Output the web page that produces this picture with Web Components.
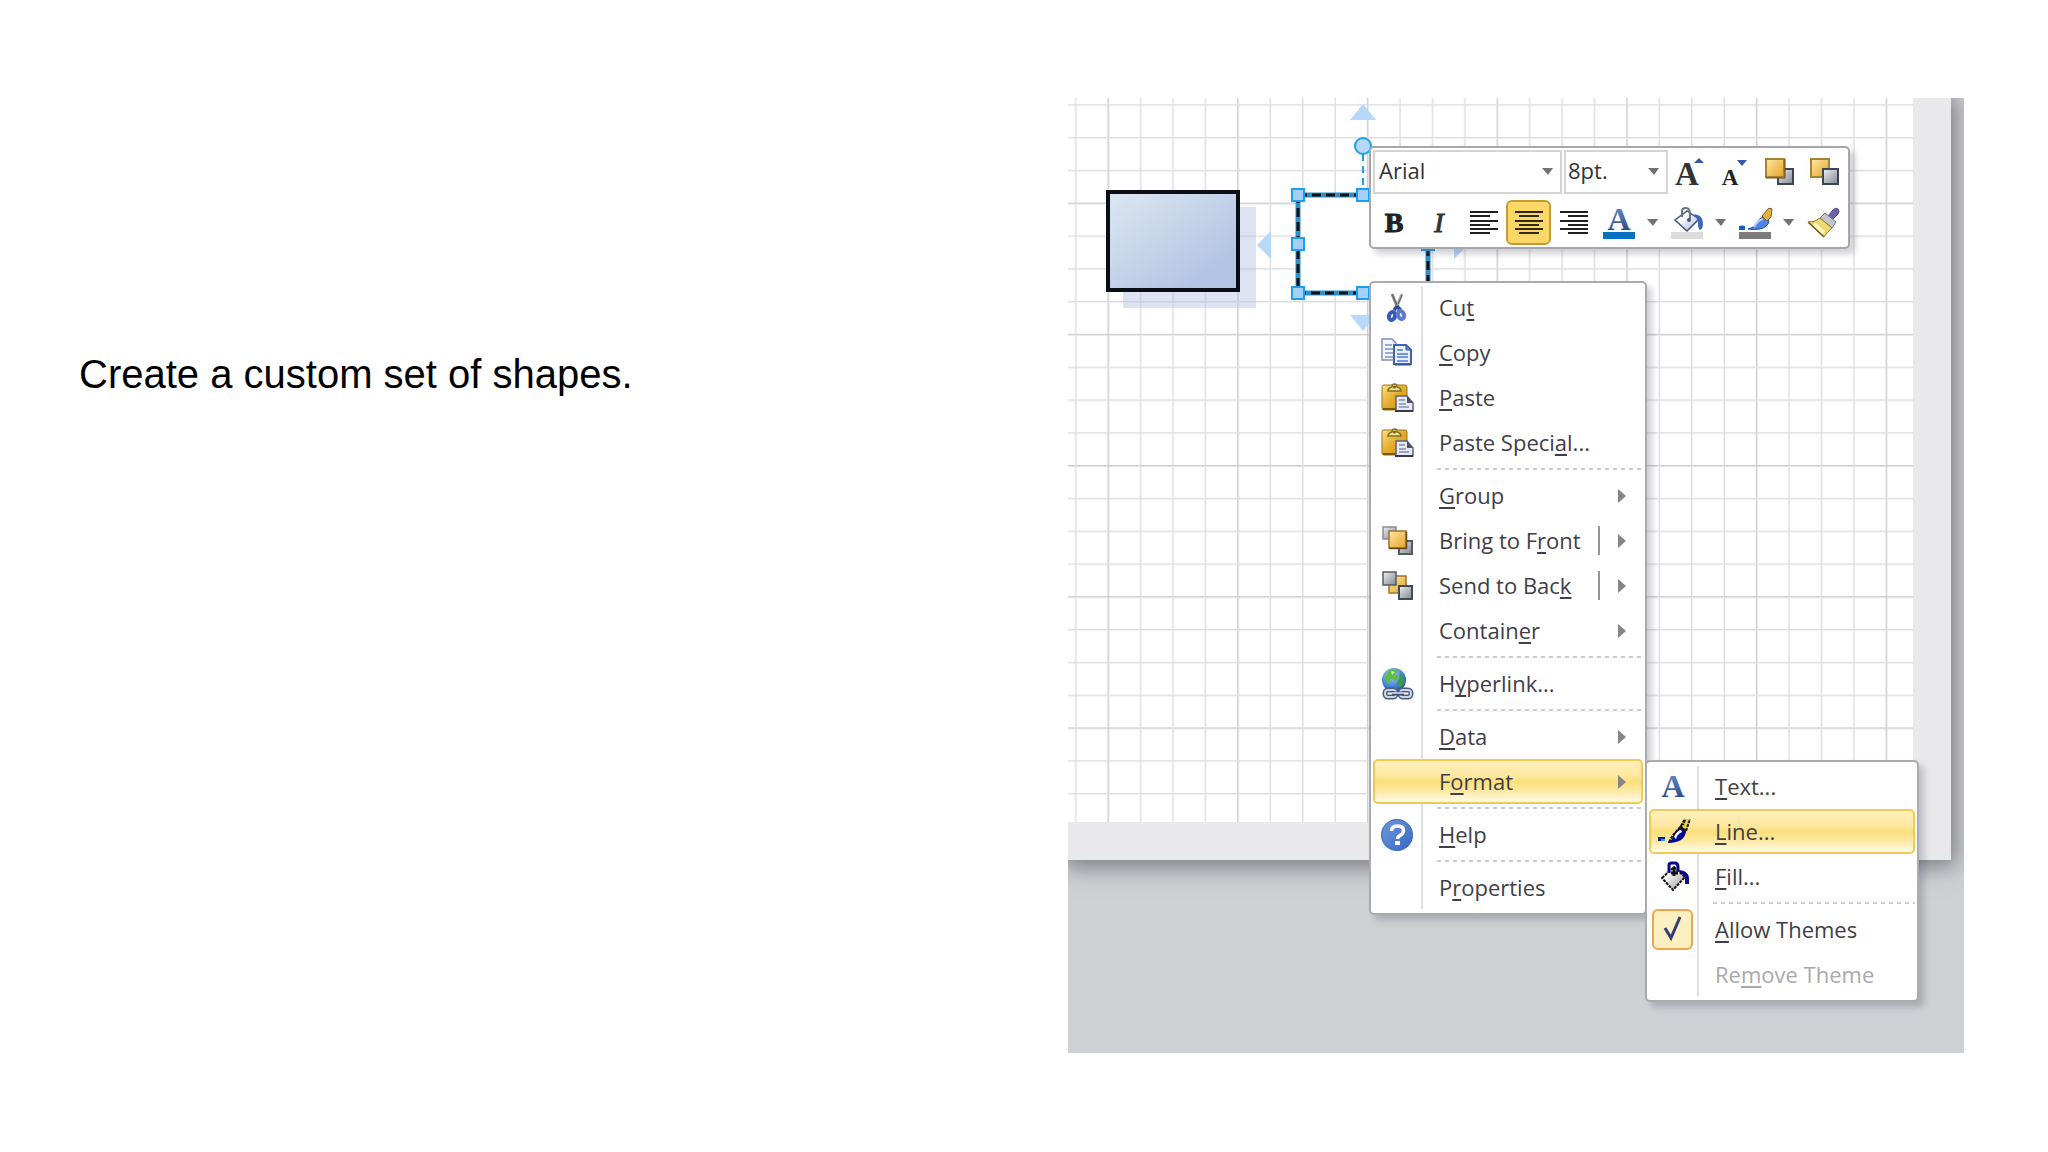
<!DOCTYPE html>
<html lang="en">
<head>
<meta charset="utf-8">
<title>Create a custom set of shapes</title>
<style>
	body {
		margin: 0;
		background: #fff;
		font-family: "Liberation Sans", Arial, sans-serif;
	}
	/* access keys */
	u {
		text-decoration-thickness: 2px;
		text-underline-offset: 3px;
		text-decoration-skip-ink: none;
	}
</style>
</head>
<body>
<slide-page>
	<span>Create a custom set of shapes.</span>
	<drawing-stage slot="figure">
		<shape-canvas></shape-canvas>
		<mini-toolbar slot="toolbar"></mini-toolbar>
		<context-menu slot="menu" label="Shape">
			<menu-entry icon="cut">Cu<u>t</u></menu-entry>
			<menu-entry icon="copy"><u>C</u>opy</menu-entry>
			<menu-entry icon="paste"><u>P</u>aste</menu-entry>
			<menu-entry icon="paste">Paste Speci<u>a</u>l...</menu-entry>
			<menu-rule></menu-rule>
			<menu-entry more><u>G</u>roup</menu-entry>
			<menu-entry icon="bring" more split>Bring to F<u>r</u>ont</menu-entry>
			<menu-entry icon="send" more split>Send to Bac<u>k</u></menu-entry>
			<menu-entry more>Contain<u>e</u>r</menu-entry>
			<menu-rule></menu-rule>
			<menu-entry icon="link">H<u>y</u>perlink...</menu-entry>
			<menu-rule></menu-rule>
			<menu-entry more><u>D</u>ata</menu-entry>
			<menu-entry more active>F<u>o</u>rmat</menu-entry>
			<menu-rule></menu-rule>
			<menu-entry icon="help"><u>H</u>elp</menu-entry>
			<menu-rule></menu-rule>
			<menu-entry>P<u>r</u>operties</menu-entry>
		</context-menu>
		<context-menu slot="submenu" label="Format">
			<menu-entry icon="text"><u>T</u>ext...</menu-entry>
			<menu-entry icon="line" active><u>L</u>ine...</menu-entry>
			<menu-entry icon="fill"><u>F</u>ill...</menu-entry>
			<menu-rule></menu-rule>
			<menu-entry checked><u>A</u>llow Themes</menu-entry>
			<menu-entry disabled>Re<u>m</u>ove Theme</menu-entry>
		</context-menu>
	</drawing-stage>
</slide-page>

<script>
const gold = `<linearGradient id="gold" x1="0" y1="0" x2="1" y2="1"><stop offset="0" stop-color="#ffe9a8"/><stop offset="1" stop-color="#e2a326"/></linearGradient>`;
const steel = `<linearGradient id="steel" x1="0" y1="0" x2="1" y2="1"><stop offset="0" stop-color="#eef0f3"/><stop offset="1" stop-color="#7f8791"/></linearGradient>`;

const icons = {
	cut: `
		<path d="M11 2l7 17" stroke="#8b8d93" stroke-width="3"/>
		<path d="M21 2l-7 17" stroke="#a6a8ad" stroke-width="3"/>
		<path d="M11 2l5 11M21 3l-4 9" stroke="#5e6066" stroke-width="1"/>
		<path d="M16 14l-3 4M16 14l4 4" stroke="#2c49a0" stroke-width="3"/>
		<ellipse cx="11" cy="24" rx="3" ry="4" transform="rotate(20 11 24)" fill="#fff" stroke="#3559bd" stroke-width="4"/>
		<ellipse cx="20" cy="23" rx="3" ry="4" transform="rotate(-20 20 23)" fill="#fff" stroke="#5a7bd2" stroke-width="4"/>`,
	copy: `
		<path d="M1 2h10l4 4v17H1z" fill="#f4f7fd" stroke="#8190b8" stroke-width="1.5"/>
		<path d="M4 8h7M4 12h9M4 16h9M4 20h9" stroke="#7b95ce" stroke-width="1.5"/>
		<path d="M13 8h12l5 5v14H13z" fill="#eaf0fd" stroke="#3d64b5" stroke-width="2"/>
		<path d="M25 8v5h5z" fill="#5f87d4" stroke="#2e57ab"/>
		<path d="M16 13h6M16 17h11M16 20h11M16 24h11" stroke="#4b79cf" stroke-width="1.5"/>
		<path d="M14 28h16" stroke="#2e4c8e"/>`,
	paste: `<linearGradient id="board" x1="0" y1="0" x2="1" y2="1"><stop offset="0" stop-color="#fbe08a"/><stop offset=".5" stop-color="#e3ac2c"/><stop offset="1" stop-color="#c98d12"/></linearGradient>
		<rect x="1" y="3" width="25" height="25" rx="2" fill="url(#board)" stroke="#9c741a"/>
		<path d="M2 27h14" stroke="#775714" stroke-width="2"/>
		<path d="M7 9q0-3 4-4 0-3 2.500-3t2.500 3q4 1 4 4z" fill="#ece08a" stroke="#827120" stroke-width="1.5"/>
		<circle cx="13.5" cy="5" r="1.5" fill="#6d611f"/>
		<path d="M15 14h11l6 7v8H15z" fill="#e5e9f3" stroke="#5a6378" stroke-width="1.5"/>
		<path d="M26 14v7h6z" fill="#4e5462"/>
		<path d="M18 18h6M18 22h7M18 25h10" stroke="#8590ad" stroke-width="1.5"/>
		<path d="M14 29h18" stroke="#353b49" stroke-width="2"/>`,
	bring: `${gold}${steel}
		<rect x="2" y="2" width="13" height="12" fill="url(#steel)" stroke="#8a8d93" stroke-width="1.5"/>
		<rect x="18" y="16" width="13" height="13" fill="url(#steel)" stroke="#555a63" stroke-width="2"/>
		<rect x="8" y="6" width="17" height="17" fill="url(#gold)" stroke="#a0712c" stroke-width="1.5"/>
		<path d="M8 23.5h17.5V7" stroke="#634920" stroke-width="1.5"/>`,
	send: `${gold}${steel}
		<rect x="8" y="6" width="17" height="17" fill="url(#gold)" stroke="#a0712c" stroke-width="1.5"/>
		<rect x="2" y="2" width="13" height="13" fill="url(#steel)" stroke="#555a63" stroke-width="1.5"/>
		<rect x="18" y="16" width="13" height="13" fill="url(#steel)" stroke="#454b54" stroke-width="2"/>`,
	link: `
		<radialGradient id="sea" cx=".4" cy=".3" r=".8"><stop offset="0" stop-color="#a9d5fb"/><stop offset=".6" stop-color="#4581d4"/><stop offset="1" stop-color="#1f3f8d"/></radialGradient>
		<circle cx="13" cy="12" r="12" fill="url(#sea)"/>
		<path d="M7 3q6-4 10 0l-3 3 3 2-2 5-5-2-3 5-4-5 2-4z" fill="#5dba4b"/>
		<path d="M19 5q5 4 4 10l-4 5-3-5 2-4z" fill="#3c9c49"/>
		<path d="M10 3l4 1-3 3z" fill="#d3f0a0"/>
		<g stroke="#4c5c7b" stroke-width="5"><rect x="4" y="22" width="11" height="7" rx="3"/><rect x="19" y="22" width="11" height="7" rx="3"/></g>
		<g stroke="#cad5e8" stroke-width="2"><rect x="4" y="22" width="11" height="7" rx="3"/><rect x="19" y="22" width="11" height="7" rx="3"/></g>
		<path d="M11 25.5h12" stroke="#3b4c6c" stroke-width="4"/><path d="M11 25h12" stroke="#e4ebf7" stroke-width="1.5"/>`,
	help: `
		<linearGradient id="ball" x1="0" y1="0" x2="1" y2="1"><stop offset="0" stop-color="#6f9be0"/><stop offset="1" stop-color="#3764c2"/></linearGradient>
		<circle cx="16" cy="16" r="16" fill="url(#ball)"/><circle cx="16" cy="16" r="15.5" stroke="#4a72bd"/>
		<path d="M10.5 12q0-5 6-5t6 4.500q0 3-3.500 5-2.500 1.500-2.500 3.500" stroke="#fff" stroke-width="3.5"/>
		<rect x="14" y="22" width="5" height="4" fill="#fff"/>`,
	text: `
		<linearGradient id="ink" x1="0" y1="0" x2="0" y2="1"><stop offset="0" stop-color="#6d9bd5"/><stop offset="1" stop-color="#213a78"/></linearGradient>
		<text x="16" y="26" text-anchor="middle" font-family="Liberation Serif, serif" font-weight="700" font-size="32" fill="url(#ink)">A</text>`,
	line: `
		<path d="M1 21h7v4H1z" fill="#0a1b8c"/><path d="M4 23h4v2H4z" fill="#2aa5b5"/>
		<path d="M11 26q4-1 5-6 2-6 8-9l5 4q0 5-5 9-5 3-13 3z" fill="#06089a"/>
		<path d="M17 21q3-7 7-7l1 2q-5 2-6 7z" fill="#fff"/>
		<path d="M23 10l4-7h6l-4 11z" fill="#e8db1f"/>
		<path d="M12 26l4-7 8-9 4-7M23 10l6 5 4-12M24 10l2 4M28 4l-2 5" stroke="#171717" stroke-width="2" stroke-dasharray="3 1"/>`,
	fill: `
		<linearGradient id="pail" x1="0" y1="0" x2="1" y2="1"><stop offset=".3" stop-color="#fff"/><stop offset="1" stop-color="#8a8a8a"/></linearGradient>
		<path d="M5 17L17 6l11 10-12 13z" fill="url(#pail)" stroke="#111" stroke-width="2" stroke-dasharray="3 1"/>
		<path d="M12 12V4q0-2 3-2h3q3 0 3 4v5" stroke="#080a87" stroke-width="3"/>
		<path d="M17 6v9M14 12h7" stroke="#111" stroke-width="3"/>
		<path d="M21 9q10 0 11 8v6h-4v-7z" fill="#080a87"/>`,
	alignLeft: `<path d="M2 5h28M2 9h20M2 14h28M2 18h20M2 22h28M2 26h20" stroke="#202020" stroke-width="2"/>`,
	alignCenter: `<path d="M2 5h28M6 9h20M2 14h28M6 18h20M2 22h28M6 26h20" stroke="#30280f" stroke-width="2"/>`,
	alignRight: `<path d="M2 5h28M10 9h20M2 14h28M10 18h20M2 22h28M10 26h20" stroke="#202020" stroke-width="2"/>`,
	bold: `<text x="16" y="25" text-anchor="middle" font-family="Liberation Serif, serif" font-weight="700" font-size="28" fill="#222" stroke="#222">B</text>`,
	italic: `<text x="16" y="25" text-anchor="middle" font-family="Liberation Serif, serif" font-style="italic" font-size="28" fill="#333" stroke="#333">I</text>`,
	grow: `
		<text x="14" y="29" text-anchor="middle" font-family="Liberation Serif, serif" font-weight="700" font-size="33" fill="#333">A</text>
		<path d="M21 7l5-5 5 5z" fill="#3557a8"/>`,
	shrink: `
		<text x="12" y="29" text-anchor="middle" font-family="Liberation Serif, serif" font-weight="700" font-size="23" fill="#222">A</text>
		<path d="M19 4h10l-5 6z" fill="#3557a8"/>`,
	front: `${gold}${steel}
		<rect x="15" y="13" width="15" height="15" fill="url(#steel)" stroke="#3b4553" stroke-width="2"/>
		<rect x="3" y="3" width="18" height="18" fill="url(#gold)" stroke="#a9802f" stroke-width="2"/>
		<path d="M3 22h19V3" stroke="#61491d"/>`,
	back: `${gold}${steel}
		<rect x="3" y="3" width="18" height="18" fill="url(#gold)" stroke="#a9802f" stroke-width="2"/>
		<rect x="15" y="13" width="15" height="15" fill="url(#steel)" stroke="#3b4553" stroke-width="2"/>`,
	fontColor: `
		<linearGradient id="ink" x1="0" y1="0" x2="0" y2="1"><stop offset="0" stop-color="#6d9bd5"/><stop offset="1" stop-color="#213a78"/></linearGradient>
		<text x="16" y="23" text-anchor="middle" font-family="Liberation Serif, serif" font-weight="700" font-size="32" fill="url(#ink)">A</text>
		<path d="M0 25h32v7H0z" fill="#0870c0"/>`,
	fillColor: `
		<linearGradient id="can" x1="0" y1="0" x2="1" y2="1"><stop offset=".3" stop-color="#fff"/><stop offset="1" stop-color="#9fb2da"/></linearGradient>
		<path d="M4 13L16 4l12 8-12 12z" fill="url(#can)" stroke="#455679" stroke-width="1.5"/>
		<path d="M11 10V4q0-3 4-3t4 6v5" stroke="#6c7380" stroke-width="2"/><circle cx="18" cy="13" r="2" fill="#555"/>
		<path d="M23 7q9 1 9 9 0 6-3 7-2-1-2-6 0-5-4-10z" fill="#3c67b8"/>
		<path d="M0 25h32v7H0z" fill="#dcdcdc"/>`,
	lineColor: `
		<path d="M0 19q3-1 6 0v4H0z" fill="#1758c5"/>
		<path d="M9 22q6-1 9-7 3-5 8-5l4 4q-1 6-9 8-5 1-12 0z" fill="#4e83e4" stroke="#224ba4"/>
		<path d="M15 20q4-7 9-8" stroke="#b3d0ff" stroke-width="2"/>
		<path d="M23 9l7-8 3 1-1 8-4 4z" fill="#e7b13d" stroke="#7a5a22"/>
		<path d="M0 25h32v7H0z" fill="#7c7c7c"/>`,
	painter: `
		<path d="M21 9l5-6q3-3 5-1t0 5l-6 6z" fill="#6f62ac" stroke="#4b4285"/>
		<path d="M13 11l5-5 11 9-4 6z" fill="#c2c5ca" stroke="#74777c"/>
		<path d="M1 15q6 1 12-4l12 10q-5 4-8 9z" fill="#ecd970" stroke="#8d7a2a"/>
		<path d="M7 17l10 9" stroke="#fff8c4" stroke-width="4"/>
		<path d="M1 15l16 15" stroke="#6e5c1b" stroke-width="1.5"/>`
};

class GlyphIcon extends HTMLElement {
	constructor(){
		super();
		this.attachShadow({mode:"open"});
	}

	connectedCallback(){
		this.shadowRoot.innerHTML = `
			<style>
				:host {
					display: block;
					width: 32px;
					height: 32px;
				}
				svg {
					display: block;
					overflow: visible;
				}
			</style>
			<svg viewBox="0 0 32 32" width="32" height="32" fill="none" aria-hidden="true">${icons[this.getAttribute("name")]||""}</svg>
		`;
	}
}
customElements.define("glyph-icon",GlyphIcon);

class SlidePage extends HTMLElement {
	constructor(){
		super();
		this.attachShadow({mode:"open"});
		this.shadowRoot.innerHTML = `
			<style>
				:host {
					display: grid;
					grid-template-columns: minmax(0,1fr) minmax(0,1fr);
					gap: 93px;
					box-sizing: border-box;
					min-height: 100vh;
					padding: 98px 84px 99px 79px;
				}
				h1 {
					margin: 252px 0 0;
					font-size: 40px;
					line-height: 48px;
					font-weight: 400;
					color: #000;
				}
			</style>
			<h1><slot></slot></h1>
			<slot name="figure"></slot>
		`;
	}
}
customElements.define("slide-page",SlidePage);

class DrawingStage extends HTMLElement {
	constructor(){
		super();
		this.attachShadow({mode:"open"});
		this.shadowRoot.innerHTML = `
			<style>
				:host {
					display: flex;
					position: relative;
					overflow: hidden;
					box-sizing: border-box;
					padding: 0 13px 193px 0;
					background: #ced0d4;
					font-family: "Open Sans", "Noto Sans", sans-serif;
					font-size: 22px;
					color: #403e49;
				}
				.sheet {
					flex: 1;
					display: flex;
					border: solid #e9e9eb;
					border-width: 0 38px 38px 0;
					box-shadow: 0 2px 22px 4px #73777b;
					background: #fff;
				}
				/* floating windows over the sheet */
				slot[name] {
					display: block;
					position: absolute;
				}
				slot[name=toolbar] {
					left: 301px;
					top: 48px;
				}
				slot[name=menu] {
					left: 301px;
					top: 183px;
					width: 278px;
				}
				slot[name=submenu] {
					left: 577px;
					top: 662px;
					width: 274px;
				}
			</style>
			<div class="sheet"><slot></slot></div>
			<slot name="toolbar"></slot>
			<slot name="menu"></slot>
			<slot name="submenu"></slot>
		`;
	}
}
customElements.define("drawing-stage",DrawingStage);

class ShapeCanvas extends HTMLElement {
	constructor(){
		super();
		this._stepX = 32.42;
		this._stepY = 32.8;
		this.attachShadow({mode:"open"});
		this.shadowRoot.innerHTML = `
			<style>
				:host {
					display: block;
					flex: 1;
					position: relative;
				}
				svg {
					position: absolute;
					width: 100%;
					height: 100%;
				}
			</style>
			<svg role="img" aria-label="Drawing page with two rectangles">
				<defs>
					<pattern id="grid" x="39.5" y="104.6" width="${this._stepX*4}" height="${this._stepY*4}" patternUnits="userSpaceOnUse">${this._gridLines()}</pattern>
					<linearGradient id="blue" x1="0" y1="0" x2=".8" y2=".8"><stop offset="0" stop-color="#dde7f2"/><stop offset="1" stop-color="#b3c5e3"/></linearGradient>
				</defs>
				<rect width="100%" height="100%" fill="url(#grid)"/>
				<rect x="55" y="109" width="133" height="101" fill="#b3c2e2" fill-opacity=".45"/>
				<rect x="40" y="94" width="130" height="98" fill="url(#blue)" stroke="#0b0e14" stroke-width="4"/>
				<rect x="230" y="97" width="130" height="98" fill="#fff"/>
				<rect x="230" y="97" width="130" height="98" fill="none" stroke="#2f8fc8" stroke-width="5"/>
				<rect x="230" y="97" width="130" height="98" fill="none" stroke="#111" stroke-width="3" stroke-dasharray="9 5"/>
				<path d="M295 56v34" stroke="#1ca0ee" stroke-width="2" stroke-dasharray="7 5"/>
				<g fill="#b5d8fb">
					<path d="M282 22l13-16 13 16z"/>
					<path d="M282 217l13 16 13-16z"/>
					<path d="M203 133l-14 14 14 14z"/>
					<path d="M386 133l14 14-14 14z"/>
				</g>
				<circle cx="295" cy="48" r="8" fill="#b5d8fb" stroke="#1ca0ee" stroke-width="2"/>
				<g fill="#a6d0fb" stroke="#1ca0ee" stroke-width="2">${this._handles()}</g>
			</svg>
		`;
	}

	_gridLines(){
		let lines = "";
		for (let i=0;i<4;i++){
			let color = i==0?"#cdcdd0":"#dfdfe2";
			lines += `<rect x="${i*this._stepX}" y="0" width="1.5" height="132" fill="${color}"/>`;
			lines += `<rect x="0" y="${i*this._stepY}" width="130" height="1.5" fill="${color}"/>`;
		}
		return lines;
	}

	_handles(){
		let handles = "";
		for (let x of [230,295,360]){
			for (let y of [97,146,195]){
				if (x!=295||y!=146){
					handles += `<rect x="${x-6}" y="${y-6}" width="12" height="12"/>`;
				}
			}
		}
		return handles;
	}
}
customElements.define("shape-canvas",ShapeCanvas);

class MiniToolbar extends HTMLElement {
	constructor(){
		super();
		this.attachShadow({mode:"open"});
		this.shadowRoot.innerHTML = `
			<style>
				:host {
					display: grid;
					gap: 6px;
					box-sizing: border-box;
					width: 481px;
					padding: 1px 0 2px;
					border: 2px solid #a6a6ab;
					border-radius: 5px;
					background: #fff;
					box-shadow: 5px 5px 6px rgba(70,70,90,.25);
				}
				.row {
					display: flex;
					align-items: center;
				}
				label {
					display: flex;
					align-items: center;
					position: relative;
					margin-left: 2px;
				}
				select {
					appearance: none;
					box-sizing: border-box;
					width: 189px;
					height: 44px;
					padding: 0 4px 4px;
					border: 2px solid #d3d4d8;
					background: #fff;
					font: inherit;
					color: #333;
				}
				.size {
					margin-right: -2px;
				}
				.size select {
					width: 104px;
					padding: 0 2px 4px;
				}
				label svg {
					position: absolute;
					right: 9px;
				}
				button {
					display: flex;
					align-items: center;
					justify-content: center;
					box-sizing: border-box;
					width: 45px;
					height: 45px;
					padding: 0;
					border: 2px solid transparent;
					border-radius: 6px;
					background: none;
				}
				button[aria-pressed=true] {
					border-color: #c79a34;
					background: #fbd767;
				}
				.drop {
					width: 23px;
				}
			</style>
			<div class="row">
				<label><select aria-label="Font"><option>Arial</option></select>${this._arrow()}</label>
				<label class="size"><select aria-label="Font size"><option>8pt.</option></select>${this._arrow()}</label>
				${this._button("grow","Grow font")}
				${this._button("shrink","Shrink font")}
				${this._button("front","Bring forward")}
				${this._button("back","Send backward")}
			</div>
			<div class="row">
				${this._button("bold","Bold")}
				${this._button("italic","Italic")}
				${this._button("alignLeft","Align left")}
				${this._button("alignCenter","Center",true)}
				${this._button("alignRight","Align right")}
				${this._button("fontColor","Font color")}
				${this._drop("Font colors")}
				${this._button("fillColor","Fill")}
				${this._drop("Fill colors")}
				${this._button("lineColor","Line")}
				${this._drop("Line colors")}
				${this._button("painter","Format painter")}
			</div>
		`;
	}

	_arrow(){
		return `<svg width="11" height="7" aria-hidden="true"><path d="M0 0h11l-5 7z" fill="#727272"/></svg>`;
	}

	_button(icon,label,pressed){
		return `<button type="button" aria-label="${label}"${pressed?' aria-pressed="true"':""}><glyph-icon name="${icon}"></glyph-icon></button>`;
	}

	_drop(label){
		return `<button type="button" class="drop" aria-label="${label}">${this._arrow()}</button>`;
	}
}
customElements.define("mini-toolbar",MiniToolbar);

class ContextMenu extends HTMLElement {
	constructor(){
		super();
		this.attachShadow({mode:"open"});
		this.shadowRoot.innerHTML = `
			<style>
				:host {
					display: block;
					box-sizing: border-box;
					padding: 2px 2px 3px;
					border: 2px solid #aaaab0;
					border-radius: 5px;
					background: linear-gradient(#dfe0e4,#dfe0e4) 50px 4px / 2px calc(100% - 8px) no-repeat #fff;
					box-shadow: 5px 5px 6px rgba(70,70,90,.25);
				}
			</style>
			<slot></slot>
		`;
	}

	connectedCallback(){
		this.setAttribute("role","menu");
		this.setAttribute("aria-label",this.getAttribute("label"));
	}
}
customElements.define("context-menu",ContextMenu);

class MenuEntry extends HTMLElement {
	constructor(){
		super();
		this.attachShadow({mode:"open"});
	}

	connectedCallback(){
		let checked = this.hasAttribute("checked");
		let tag = checked?"label":"button";
		this.shadowRoot.innerHTML = `
			<style>
				:host {
					display: block;
				}
				.entry {
					display: grid;
					grid-template-columns: 46px 1fr auto 23px;
					align-items: center;
					box-sizing: border-box;
					width: 100%;
					height: 45px;
					padding: 0;
					border: 2px solid transparent;
					border-radius: 5px;
					background: none;
					font: inherit;
					color: inherit;
					text-align: left;
					white-space: nowrap;
				}
				:host([active]) .entry {
					border-color: #f0ca55;
					background: linear-gradient(#fff0bd,#fde8a0 35%,#fbdf7c 50%,#fce79c 70%,#fffbe8);
				}
				:host([disabled]) .entry {
					color: #a9a9ad;
				}
				glyph-icon {
					margin-left: 6px;
				}
				.text {
					grid-column: 2;
					padding: 0 0 2px 18px;
				}
				.split {
					grid-column: 3;
					width: 2px;
					height: 29px;
					margin-right: 18px;
					background: #96969a;
				}
				.more {
					grid-column: 4;
				}
				input {
					appearance: none;
					box-sizing: border-box;
					width: 41px;
					height: 41px;
					margin: 0;
					border: 2px solid #eda650;
					border-radius: 6px;
					background: #fdf0c0;
				}
				.box {
					display: grid;
					margin-left: 1px;
				}
				.box > * {
					grid-area: 1 / 1;
				}
			</style>
			<${tag} class="entry" ${checked?"":'type="button" role="menuitem"'} ${this.hasAttribute("disabled")?"disabled":""}>
				${checked?`<span class="box"><input type="checkbox" checked><svg width="41" height="41" aria-hidden="true"><path d="M13 19l6 10 9-21" fill="none" stroke="#343b78" stroke-width="3"/></svg></span>`:""}
				${this.hasAttribute("icon")?`<glyph-icon name="${this.getAttribute("icon")}"></glyph-icon>`:""}
				<span class="text"><slot></slot></span>
				${this.hasAttribute("split")?`<span class="split"></span>`:""}
				${this.hasAttribute("more")?`<svg class="more" width="8" height="14" aria-hidden="true"><path d="M0 0l8 7-8 7z" fill="#858589"/></svg>`:""}
			</${tag}>
		`;
	}
}
customElements.define("menu-entry",MenuEntry);

class MenuRule extends HTMLElement {
	constructor(){
		super();
		this.attachShadow({mode:"open"});
		this.shadowRoot.innerHTML = `
			<style>
				:host {
					display: block;
					box-sizing: border-box;
					height: 8px;
					margin-left: 64px;
					padding-top: 3px;
				}
				div {
					height: 2px;
					background: repeating-linear-gradient(90deg,#cbcbd0 0 4px,transparent 4px 8px);
				}
			</style>
			<div role="separator"></div>
		`;
	}
}
customElements.define("menu-rule",MenuRule);
</script>
</body>
</html>
